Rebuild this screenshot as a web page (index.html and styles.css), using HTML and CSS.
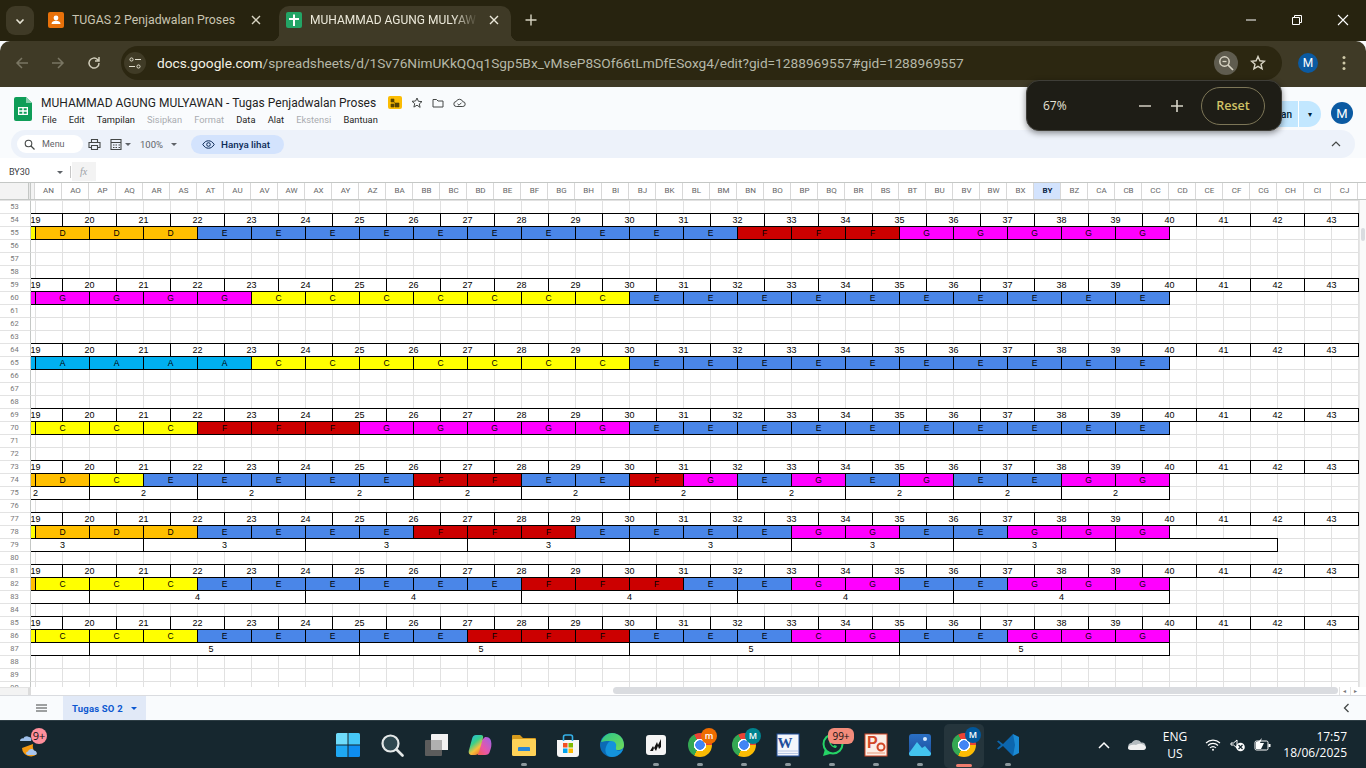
FILE: index.html
```html
<!DOCTYPE html>
<html lang="id">
<head>
<meta charset="utf-8">
<title>MUHAMMAD AGUNG MULYAWAN - Tugas Penjadwalan Proses</title>
<link rel="stylesheet" href="styles.css">
</head>
<body>
<div class="tabs">
  <div class="tabmenu"><svg width="12" height="12" viewBox="0 0 12 12"><path d="M2.500 4.500 6 8l3.500-3.500" fill="none" stroke="#e6e3d4" stroke-width="1.600"/></svg></div>
  <div class="tab">
    <svg class="fav" width="16" height="16" viewBox="0 0 16 16"><rect width="16" height="16" rx="2" fill="#e8710a"/><circle cx="8" cy="6" r="2.400" fill="#fff"/><path d="M3.500 12c0-2.400 2-3.200 4.500-3.200s4.500.8 4.500 3.200z" fill="#fff"/></svg>
    <span class="tabtext">TUGAS 2 Penjadwalan Proses</span>
    <svg class="x" width="10" height="10" viewBox="0 0 10 10"><path d="M1 1l8 8M9 1 1 9" stroke="#d8d4c2" stroke-width="1.400"/></svg>
  </div>
  <div class="tab on">
    <svg class="fav" width="16" height="16" viewBox="0 0 16 16"><rect width="16" height="16" rx="2" fill="#23a566"/><path d="M7 2.500h2V6h4v2H9v6H7V8H3V6h4z" fill="#fff"/></svg>
    <span class="tabtext fade">MUHAMMAD AGUNG MULYAW</span>
    <svg class="x" width="10" height="10" viewBox="0 0 10 10"><path d="M1 1l8 8M9 1 1 9" stroke="#ece9da" stroke-width="1.400"/></svg>
  </div>
  <svg class="plus" width="12" height="12" viewBox="0 0 12 12"><path d="M6 .5v11M.5 6h11" stroke="#d8d4c2" stroke-width="1.400"/></svg>
  <div class="wincontrols">
    <svg width="12" height="12" viewBox="0 0 12 12"><path d="M1 6h10" stroke="#fff"/></svg>
    <svg width="12" height="12" viewBox="0 0 12 12"><path d="M1.500 3.500h7v7h-7zM3.500 3V1.500h7v7H9" fill="none" stroke="#fff"/></svg>
    <svg width="12" height="12" viewBox="0 0 12 12"><path d="M1 1l10 10M11 1 1 11" stroke="#fff" stroke-width="1.100"/></svg>
  </div>
</div>

<div class="navbar">
  <svg class="nav1" width="16" height="16" viewBox="0 0 16 16"><path d="M14 8H3M8 3 3 8l5 5" fill="none" stroke="#7a7663" stroke-width="1.500"/></svg>
  <svg class="nav2" width="16" height="16" viewBox="0 0 16 16"><path d="M2 8h11M8 3l5 5-5 5" fill="none" stroke="#7a7663" stroke-width="1.500"/></svg>
  <svg class="nav3" width="16" height="16" viewBox="0 0 16 16"><path d="M13 8a5 5 0 1 1-1.500-3.500L13 6M13 2v4H9" fill="none" stroke="#cfcbb8" stroke-width="1.500"/></svg>
  <div class="omni">
    <span class="site"><svg width="14" height="14" viewBox="0 0 14 14"><circle cx="3.500" cy="3.500" r="1.600" fill="none" stroke="#e2dfce"/><path d="M7 3.500h6M1 10.500h6" stroke="#e2dfce" stroke-width="1.200"/><circle cx="10.500" cy="10.500" r="1.600" fill="none" stroke="#e2dfce"/></svg></span>
    <span class="url"><span class="host">docs.google.com</span>/spreadsheets/d/1Sv76NimUKkQQq1Sgp5Bx_vMseP8SOf66tLmDfESoxg4/edit?gid=1288969557#gid=1288969557</span>
    <span class="zoombtn"><svg width="16" height="16" viewBox="0 0 16 16"><circle cx="6.500" cy="6.500" r="4.700" fill="none" stroke="#d8d4c4" stroke-width="1.500"/><path d="M10 10l5 5" stroke="#d8d4c4" stroke-width="1.700"/><path d="M4.500 6.500h4" stroke="#d8d4c4" stroke-width="1.300"/></svg></span>
    <svg class="star" width="16" height="16" viewBox="0 0 16 16"><path d="m8 1.500 1.900 4.300 4.600.4-3.500 3 1.100 4.600L8 11.400l-4.100 2.400L5 9.200l-3.500-3 4.600-.4z" fill="none" stroke="#d8d4c4" stroke-width="1.400"/></svg>
  </div>
  <span class="avatar a20">M</span>
  <svg class="more" width="4" height="16" viewBox="0 0 4 16"><circle cx="2" cy="2.500" r="1.500" fill="#cfc9a8"/><circle cx="2" cy="8" r="1.500" fill="#cfc9a8"/><circle cx="2" cy="13.500" r="1.500" fill="#cfc9a8"/></svg>
</div>

<div class="zoompop">
  <span class="pct">67%</span>
  <svg class="zm" width="14" height="14" viewBox="0 0 14 14"><path d="M1 7h12" stroke="#c8c5b8" stroke-width="1.600"/></svg>
  <svg class="zp" width="14" height="14" viewBox="0 0 14 14"><path d="M1 7h12M7 1v12" stroke="#d8d5c8" stroke-width="1.600"/></svg>
  <span class="reset">Reset</span>
</div>

<div class="dochead">
  <svg class="logo" width="18" height="24" viewBox="0 0 18 24"><path d="M2 0h10l6 6v16a2 2 0 0 1-2 2H2a2 2 0 0 1-2-2V2a2 2 0 0 1 2-2z" fill="#0f9d58"/><path d="M12 0l6 6h-6z" fill="#87ceac"/><path d="M4 10h10v8H4zm1.300 1.300v2h3v-2zm4.400 0v2h3v-2zm-4.400 3.400v2h3v-2zm4.400 0v2h3v-2z" fill="#fff" fill-rule="evenodd"/></svg>
  <div class="titles">
    <div class="titleline">
      <span class="doctitle">MUHAMMAD AGUNG MULYAWAN - Tugas Penjadwalan Proses</span>
      <span class="lock"><svg width="10" height="10" viewBox="0 0 10 10"><path d="M1 1l8 8M1 1h3v3H1zM5 5h4v4H5zM1 6h3v3H1z" fill="#5a4500" stroke="#5a4500" stroke-width=".6"/></svg></span>
      <svg class="hicon first" width="12" height="12" viewBox="0 0 12 12"><path d="m6 1 1.400 3.300 3.600.3-2.700 2.300.8 3.500L6 8.200 2.900 10.100l.8-3.500L1 4.300l3.600-.3z" fill="none" stroke="#444746"/></svg>
      <svg class="hicon" width="12" height="12" viewBox="0 0 12 12"><path d="M1 2.500h3.500L6 4h5v6H1z" fill="none" stroke="#444746"/></svg>
      <svg class="hicon" width="13" height="12" viewBox="0 0 13 12"><path d="M3.500 9.500a2.500 2.500 0 0 1-.3-5 3.500 3.500 0 0 1 6.600.2 2.400 2.400 0 0 1 0 4.800zM4.500 6.800 6 8.200l2.500-2.500" fill="none" stroke="#444746"/></svg>
    </div>
    <div class="menus"><span>File</span><span>Edit</span><span>Tampilan</span><span class="dim">Sisipkan</span><span class="dim">Format</span><span>Data</span><span>Alat</span><span class="dim">Ekstensi</span><span>Bantuan</span></div>
  </div>
  <div class="share"><span class="sharetext">Bagikan</span><span class="sharecaret">&#9662;</span></div>
  <span class="avatar a22">M</span>
</div>

<div class="toolbar">
  <div class="search"><svg width="11" height="11" viewBox="0 0 11 11"><circle cx="4.500" cy="4.500" r="3.300" fill="none" stroke="#444746" stroke-width="1.100"/><path d="M7 7l3.500 3.500" stroke="#444746" stroke-width="1.200"/></svg><span>Menu</span></div>
  <svg class="ticon" width="13" height="13" viewBox="0 0 13 13"><path d="M3.500 4V1.500h6V4M3 9.500H1V4.500h11v5h-2M3.500 7.500h6v4h-6z" fill="none" stroke="#444746" stroke-width="1.100"/></svg>
  <svg class="ticon t2" width="12" height="13" viewBox="0 0 12 13"><path d="M1 1.500h10v10H1zM1 4.500h10M3 7h1.500M5.500 7H7M8.500 7H10M3 9.500h1.500M5.500 9.500H7M8.500 9.500H10" fill="none" stroke="#444746" stroke-width="1.100"/></svg>
  <span class="caret c1"></span>
  <span class="pctsel">100%</span>
  <span class="caret c2"></span>
  <div class="viewonly"><svg width="13" height="9" viewBox="0 0 13 9"><path d="M.8 4.500C2.500 1.800 4.300.8 6.500.8s4 1 5.700 3.700c-1.700 2.700-3.500 3.700-5.700 3.700S2.500 7.200.8 4.500z" fill="none" stroke="#0b2a57"/><circle cx="6.500" cy="4.500" r="1.800" fill="none" stroke="#0b2a57"/></svg><span>Hanya lihat</span></div>
  <svg class="collapse" width="10" height="6" viewBox="0 0 10 6"><path d="M1 5l4-4 4 4" fill="none" stroke="#444746" stroke-width="1.200"/></svg>
</div>

<div class="fbar">
  <span class="namebox">BY30</span>
  <span class="caret c3"></span>
  <span class="fsep"></span>
  <span class="fx">fx</span>
</div>

<div class="colhead">
  <div class="corner"></div>
  <div class="cols"><span>AN</span><span>AO</span><span>AP</span><span>AQ</span><span>AR</span><span>AS</span><span>AT</span><span>AU</span><span>AV</span><span>AW</span><span>AX</span><span>AY</span><span>AZ</span><span>BA</span><span>BB</span><span>BC</span><span>BD</span><span>BE</span><span>BF</span><span>BG</span><span>BH</span><span>BI</span><span>BJ</span><span>BK</span><span>BL</span><span>BM</span><span>BN</span><span>BO</span><span>BP</span><span>BQ</span><span>BR</span><span>BS</span><span>BT</span><span>BU</span><span>BV</span><span>BW</span><span>BX</span><span class="sel">BY</span><span>BZ</span><span>CA</span><span>CB</span><span>CC</span><span>CD</span><span>CE</span><span>CF</span><span>CG</span><span>CH</span><span>CI</span><span>CJ</span></div>
</div>

<div class="sheet">
  <div class="rows">
    <div class="r"><b class="rn">53</b></div>
    <div class="r"><b class="rn">54</b><div class="cs nums"><u></u><i>19</i><i>20</i><i>21</i><i>22</i><i>23</i><i>24</i><i>25</i><i>26</i><i>27</i><i>28</i><i>29</i><i>30</i><i>31</i><i>32</i><i>33</i><i>34</i><i>35</i><i>36</i><i>37</i><i>38</i><i>39</i><i>40</i><i>41</i><i>42</i><i>43</i></div></div>
    <div class="r"><b class="rn">55</b><div class="cs bar"><u></u><i class="st y"></i><i class="o">D</i><i class="o">D</i><i class="o">D</i><i class="b">E</i><i class="b">E</i><i class="b">E</i><i class="b">E</i><i class="b">E</i><i class="b">E</i><i class="b">E</i><i class="b">E</i><i class="b">E</i><i class="b">E</i><i class="d">F</i><i class="d">F</i><i class="d">F</i><i class="m">G</i><i class="m">G</i><i class="m">G</i><i class="m">G</i><i class="m">G</i></div></div>
    <div class="r"><b class="rn">56</b></div>
    <div class="r"><b class="rn">57</b></div>
    <div class="r"><b class="rn">58</b></div>
    <div class="r"><b class="rn">59</b><div class="cs nums"><u></u><i>19</i><i>20</i><i>21</i><i>22</i><i>23</i><i>24</i><i>25</i><i>26</i><i>27</i><i>28</i><i>29</i><i>30</i><i>31</i><i>32</i><i>33</i><i>34</i><i>35</i><i>36</i><i>37</i><i>38</i><i>39</i><i>40</i><i>41</i><i>42</i><i>43</i></div></div>
    <div class="r"><b class="rn">60</b><div class="cs bar"><u></u><i class="st m"></i><i class="m">G</i><i class="m">G</i><i class="m">G</i><i class="m">G</i><i class="y">C</i><i class="y">C</i><i class="y">C</i><i class="y">C</i><i class="y">C</i><i class="y">C</i><i class="y">C</i><i class="b">E</i><i class="b">E</i><i class="b">E</i><i class="b">E</i><i class="b">E</i><i class="b">E</i><i class="b">E</i><i class="b">E</i><i class="b">E</i><i class="b">E</i></div></div>
    <div class="r"><b class="rn">61</b></div>
    <div class="r"><b class="rn">62</b></div>
    <div class="r"><b class="rn">63</b></div>
    <div class="r"><b class="rn">64</b><div class="cs nums"><u></u><i>19</i><i>20</i><i>21</i><i>22</i><i>23</i><i>24</i><i>25</i><i>26</i><i>27</i><i>28</i><i>29</i><i>30</i><i>31</i><i>32</i><i>33</i><i>34</i><i>35</i><i>36</i><i>37</i><i>38</i><i>39</i><i>40</i><i>41</i><i>42</i><i>43</i></div></div>
    <div class="r"><b class="rn">65</b><div class="cs bar"><u></u><i class="st a"></i><i class="a">A</i><i class="a">A</i><i class="a">A</i><i class="a">A</i><i class="y">C</i><i class="y">C</i><i class="y">C</i><i class="y">C</i><i class="y">C</i><i class="y">C</i><i class="y">C</i><i class="b">E</i><i class="b">E</i><i class="b">E</i><i class="b">E</i><i class="b">E</i><i class="b">E</i><i class="b">E</i><i class="b">E</i><i class="b">E</i><i class="b">E</i></div></div>
    <div class="r"><b class="rn">66</b></div>
    <div class="r"><b class="rn">67</b></div>
    <div class="r"><b class="rn">68</b></div>
    <div class="r"><b class="rn">69</b><div class="cs nums"><u></u><i>19</i><i>20</i><i>21</i><i>22</i><i>23</i><i>24</i><i>25</i><i>26</i><i>27</i><i>28</i><i>29</i><i>30</i><i>31</i><i>32</i><i>33</i><i>34</i><i>35</i><i>36</i><i>37</i><i>38</i><i>39</i><i>40</i><i>41</i><i>42</i><i>43</i></div></div>
    <div class="r"><b class="rn">70</b><div class="cs bar"><u></u><i class="st y"></i><i class="y">C</i><i class="y">C</i><i class="y">C</i><i class="d">F</i><i class="d">F</i><i class="d">F</i><i class="m">G</i><i class="m">G</i><i class="m">G</i><i class="m">G</i><i class="m">G</i><i class="b">E</i><i class="b">E</i><i class="b">E</i><i class="b">E</i><i class="b">E</i><i class="b">E</i><i class="b">E</i><i class="b">E</i><i class="b">E</i><i class="b">E</i></div></div>
    <div class="r"><b class="rn">71</b></div>
    <div class="r"><b class="rn">72</b></div>
    <div class="r"><b class="rn">73</b><div class="cs nums"><u></u><i>19</i><i>20</i><i>21</i><i>22</i><i>23</i><i>24</i><i>25</i><i>26</i><i>27</i><i>28</i><i>29</i><i>30</i><i>31</i><i>32</i><i>33</i><i>34</i><i>35</i><i>36</i><i>37</i><i>38</i><i>39</i><i>40</i><i>41</i><i>42</i><i>43</i></div></div>
    <div class="r"><b class="rn">74</b><div class="cs bar"><u></u><i class="st o"></i><i class="o">D</i><i class="y">C</i><i class="b">E</i><i class="b">E</i><i class="b">E</i><i class="b">E</i><i class="b">E</i><i class="d">F</i><i class="d">F</i><i class="b">E</i><i class="b">E</i><i class="d">F</i><i class="m">G</i><i class="b">E</i><i class="m">G</i><i class="b">E</i><i class="m">G</i><i class="b">E</i><i class="b">E</i><i class="m">G</i><i class="m">G</i></div></div>
    <div class="r"><b class="rn">75</b><div class="cs lab"><i class="w4">2</i><i class="w4">2</i><i class="w4">2</i><i class="w4">2</i><i class="w4">2</i><i class="w4">2</i><i class="w4">2</i><i class="w4">2</i><i class="w4">2</i><i class="w4">2</i><i class="w4">2</i></div></div>
    <div class="r"><b class="rn">76</b></div>
    <div class="r"><b class="rn">77</b><div class="cs nums"><u></u><i>19</i><i>20</i><i>21</i><i>22</i><i>23</i><i>24</i><i>25</i><i>26</i><i>27</i><i>28</i><i>29</i><i>30</i><i>31</i><i>32</i><i>33</i><i>34</i><i>35</i><i>36</i><i>37</i><i>38</i><i>39</i><i>40</i><i>41</i><i>42</i><i>43</i></div></div>
    <div class="r"><b class="rn">78</b><div class="cs bar"><u></u><i class="st y"></i><i class="o">D</i><i class="o">D</i><i class="o">D</i><i class="b">E</i><i class="b">E</i><i class="b">E</i><i class="b">E</i><i class="d">F</i><i class="d">F</i><i class="d">F</i><i class="b">E</i><i class="b">E</i><i class="b">E</i><i class="b">E</i><i class="m">G</i><i class="m">G</i><i class="b">E</i><i class="b">E</i><i class="m">G</i><i class="m">G</i><i class="m">G</i></div></div>
    <div class="r"><b class="rn">79</b><div class="cs lab"><i class="w6">3</i><i class="w6">3</i><i class="w6">3</i><i class="w6">3</i><i class="w6">3</i><i class="w6">3</i><i class="w6">3</i><i class="w6"></i></div></div>
    <div class="r"><b class="rn">80</b></div>
    <div class="r"><b class="rn">81</b><div class="cs nums"><u></u><i>19</i><i>20</i><i>21</i><i>22</i><i>23</i><i>24</i><i>25</i><i>26</i><i>27</i><i>28</i><i>29</i><i>30</i><i>31</i><i>32</i><i>33</i><i>34</i><i>35</i><i>36</i><i>37</i><i>38</i><i>39</i><i>40</i><i>41</i><i>42</i><i>43</i></div></div>
    <div class="r"><b class="rn">82</b><div class="cs bar"><u></u><i class="st o"></i><i class="y">C</i><i class="y">C</i><i class="y">C</i><i class="b">E</i><i class="b">E</i><i class="b">E</i><i class="b">E</i><i class="b">E</i><i class="b">E</i><i class="d">F</i><i class="d">F</i><i class="d">F</i><i class="b">E</i><i class="b">E</i><i class="m">G</i><i class="m">G</i><i class="b">E</i><i class="b">E</i><i class="m">G</i><i class="m">G</i><i class="m">G</i></div></div>
    <div class="r"><b class="rn">83</b><div class="cs lab"><i class="w4"></i><i class="w8">4</i><i class="w8">4</i><i class="w8">4</i><i class="w8">4</i><i class="w8">4</i></div></div>
    <div class="r"><b class="rn">84</b></div>
    <div class="r"><b class="rn">85</b><div class="cs nums"><u></u><i>19</i><i>20</i><i>21</i><i>22</i><i>23</i><i>24</i><i>25</i><i>26</i><i>27</i><i>28</i><i>29</i><i>30</i><i>31</i><i>32</i><i>33</i><i>34</i><i>35</i><i>36</i><i>37</i><i>38</i><i>39</i><i>40</i><i>41</i><i>42</i><i>43</i></div></div>
    <div class="r"><b class="rn">86</b><div class="cs bar"><u></u><i class="st y"></i><i class="y">C</i><i class="y">C</i><i class="y">C</i><i class="b">E</i><i class="b">E</i><i class="b">E</i><i class="b">E</i><i class="b">E</i><i class="d">F</i><i class="d">F</i><i class="d">F</i><i class="b">E</i><i class="b">E</i><i class="b">E</i><i class="m">C</i><i class="m">G</i><i class="b">E</i><i class="b">E</i><i class="m">G</i><i class="m">G</i><i class="m">G</i></div></div>
    <div class="r"><b class="rn">87</b><div class="cs lab"><i class="w4"></i><i class="w10">5</i><i class="w10">5</i><i class="w10">5</i><i class="w10">5</i></div></div>
    <div class="r"><b class="rn">88</b></div>
    <div class="r"><b class="rn">89</b></div>
    <div class="r"><b class="rn">90</b></div>
  </div>
  <div class="vtrack"><span class="vthumb"></span></div>
</div>

<div class="hbar">
  <span class="hcorner"></span>
  <span class="hthumb"></span>
  <span class="harrow">&#9666;</span>
  <span class="harrow">&#9656;</span>
</div>

<div class="sheetbar">
  <svg class="allsheets" width="11" height="8" viewBox="0 0 11 8"><path d="M0 1h11M0 4h11M0 7h11" stroke="#444746" stroke-width="1.100"/></svg>
  <div class="sheettab"><span>Tugas SO 2</span><span class="caret c4"></span></div>
  <svg class="sidechev" width="7" height="10" viewBox="0 0 7 10"><path d="M5.500 1 1.500 5l4 4" fill="none" stroke="#444746" stroke-width="1.300"/></svg>
</div>

<div class="taskbar">
  <div class="weather">
    <svg width="26" height="28" viewBox="0 0 26 28"><path d="M3 18a9 9 0 0 0 15 6A10 10 0 0 1 14 14z" fill="#f59a12"/><path d="M1 11c0-2 2-3 3.500-2.500C5 6.500 8 5.500 10 7c2 0 3 2 2 4z" fill="#9fc0ea"/><path d="M9 25c-2 0-3-3 0-3.500C9.500 19 13.500 18 15 20.500c3 0 4 4.500 1 4.500z" fill="#a9c6ee"/></svg>
    <span class="wbadge">9+</span>
  </div>
  <div class="tasks">
    <div class="task"><svg width="24" height="24" viewBox="0 0 24 24"><path d="M0 1.500A1.500 1.500 0 0 1 1.500 0h10v11.500H0z" fill="#6fdcfb"/><path d="M12.500 0h10A1.500 1.500 0 0 1 24 1.500v10H12.500z" fill="#46c8f8"/><path d="M0 12.500h11.500V24h-10A1.500 1.500 0 0 1 0 22.500z" fill="#1fa8f3"/><path d="M12.500 12.500H24v10a1.500 1.500 0 0 1-1.500 1.500h-10z" fill="#0e8df0"/></svg></div>
    <div class="task"><svg width="24" height="24" viewBox="0 0 24 24"><circle cx="10.500" cy="10.500" r="8" fill="#2f4850" stroke="#e4e8e8" stroke-width="2.200"/><path d="M16.500 16.500 22.500 22.500" stroke="#e4e8e8" stroke-width="2.600" stroke-linecap="round"/></svg></div>
    <div class="task"><svg width="24" height="24" viewBox="0 0 24 24"><rect x="1" y="7" width="17" height="16" rx="1" fill="#5c5c5c"/><rect x="7" y="1" width="18" height="16" rx="1" fill="#f2f2f2"/><rect x="7" y="7" width="11" height="10" fill="#b0b0b0"/></svg></div>
    <div class="task"><svg width="24" height="24" viewBox="0 0 24 24"><defs><linearGradient id="cop" x1="0" y1="0" x2=".6" y2="1"><stop offset="0" stop-color="#25b4ee"/><stop offset=".45" stop-color="#38d08a"/><stop offset=".75" stop-color="#f6c03c"/><stop offset="1" stop-color="#f08030"/></linearGradient><linearGradient id="cop2" x1="1" y1="0" x2="0" y2="1"><stop offset="0" stop-color="#9a63ea"/><stop offset=".6" stop-color="#e856a8"/><stop offset="1" stop-color="#f5604a"/></linearGradient></defs><path d="M14 7l3-3c3 0 5 .5 6 4 1 4 0 7-1 10-.7 3-2.500 4-5 4h-6c-2 0-1.500-2-1-3z" fill="url(#cop2)"/><path d="M8 2h5c2 0 2.500 1.500 2 3L11 19c-.5 2-2 3-4 3H4c-2.500 0-4-2-3-5L4 6c.6-2.500 2-4 4-4z" fill="url(#cop)"/></svg></div>
    <div class="task run"><svg width="24" height="24" viewBox="0 0 24 24"><path d="M0 3a1 1 0 0 1 1-1h7l3 3h12a1 1 0 0 1 1 1v2H0z" fill="#d69a1c"/><rect y="6" width="24" height="17" rx="1.500" fill="#ffd257"/><path d="M7 14h10a1 1 0 0 1 1 1v3H6v-3a1 1 0 0 1 1-1z" fill="#2a86d6"/></svg></div>
    <div class="task"><svg width="24" height="24" viewBox="0 0 24 24"><path d="M1 7h22v14a3 3 0 0 1-3 3H4a3 3 0 0 1-3-3z" fill="#f6f6f6"/><path d="M7.500 8V4a2 2 0 0 1 2-2h5a2 2 0 0 1 2 2v4" fill="none" stroke="#35b1e8" stroke-width="1.600"/><rect x="7" y="10" width="4.500" height="4.500" fill="#f25022"/><rect x="12.500" y="10" width="4.500" height="4.500" fill="#7fba00"/><rect x="7" y="15.500" width="4.500" height="4.500" fill="#00a4ef"/><rect x="12.500" y="15.500" width="4.500" height="4.500" fill="#ffb900"/></svg></div>
    <div class="task"><svg width="24" height="24" viewBox="0 0 24 24"><defs><linearGradient id="edg" x1="0" y1="0" x2="1" y2="1"><stop offset="0" stop-color="#2bc38a"/><stop offset="1" stop-color="#72dc58"/></linearGradient></defs><circle cx="12" cy="12" r="12" fill="#0c6ab4"/><path d="M1 9C3 3 8 0 12 0c7 0 12 5 12 12 0 4-3 5-6 5-4 0-5-2-4-4 1-3-2-5-5-5-3 0-6 .5-8 1z" fill="url(#edg)"/><path d="M11 8c4 0 6 3 5 6-1 4 3 5 7 2-1 4-6 8-11 8C7 24 4 19 6 14c1-3 3-6 5-6z" fill="#1493dc"/></svg></div>
    <div class="task run"><svg width="20" height="20" viewBox="0 0 20 20"><rect width="20" height="20" rx="3" fill="#f5f5f5"/><path d="M4 16l3-5 1 2 3-6 1 3 3-6v8l-2 2-1-3-2 5-2-3-1 3z" fill="#111"/></svg></div>
    <div class="task run"><span class="chrome"></span><span class="tb orange">m</span></div>
    <div class="task run"><span class="chrome"></span><span class="tb teal">M</span></div>
    <div class="task run"><svg width="24" height="24" viewBox="0 0 24 24"><rect x="1" y="1" width="22" height="22" fill="#f4f6fb" stroke="#1f4e9c"/><path d="M2 18h20M2 20.500h20" stroke="#b8c8e4"/><text x="1.500" y="15" class="wordw">W</text></svg></div>
    <div class="task run"><svg width="24" height="24" viewBox="0 0 24 24"><circle cx="13" cy="11" r="9.500" fill="none" stroke="#25d366" stroke-width="2"/><path d="M5 16 3 23l7-2z" fill="#25d366"/><path d="M9.500 7.500c-1.500 2 3 8 6.500 7.500l1-2-2.500-1-1 1c-1-.5-2-1.500-2.500-2.500l1-1-1-2.500z" fill="#25d366"/></svg><span class="tb pill">99+</span></div>
    <div class="task run"><svg width="24" height="24" viewBox="0 0 24 24"><rect x="1" y="1" width="22" height="22" fill="#fbeee6" stroke="#d24726"/><text x="3" y="15" class="pptp">P</text><circle cx="17" cy="14" r="3.500" fill="none" stroke="#d24726" stroke-width="2"/><path d="M3 20h18" stroke="#e89878"/></svg></div>
    <div class="task run"><svg width="24" height="24" viewBox="0 0 24 24"><defs><linearGradient id="ph" x1="0" y1="0" x2="0" y2="1"><stop offset="0" stop-color="#2a6fc4"/><stop offset="1" stop-color="#1d4f9c"/></linearGradient></defs><rect x="1" y="1" width="22" height="22" rx="3" fill="url(#ph)"/><circle cx="17" cy="6" r="2" fill="#d8ecff"/><path d="M1 20l8-11 5 6 3-2 6 7v1a2 2 0 0 1-2 2H3a2 2 0 0 1-2-2z" fill="#43c4ee"/></svg></div>
    <div class="task active"><span class="chrome"></span><span class="tb blue">M</span></div>
    <div class="task run"><svg width="24" height="24" viewBox="0 0 24 24"><path d="M17 1l6 3v16l-6 3z" fill="#1a8ad4"/><path d="M17 1 7 11 2.500 7.500 1 8.500l4 3.500-4 3.500 1.500 1L7 13l10 10 2-11z" fill="#0c66ae"/></svg></div>
  </div>
  <div class="tray">
    <svg class="tchev" width="12" height="8" viewBox="0 0 12 8"><path d="M1 7l5-5 5 5" fill="none" stroke="#fff" stroke-width="1.500"/></svg>
    <svg class="tcloud" width="18" height="11" viewBox="0 0 18 11"><path d="M4 11a3.500 3.500 0 0 1-.5-7A5.500 5.500 0 0 1 13 3.500 3.800 3.800 0 0 1 14.500 11z" fill="#b5bcc0"/><path d="M0 9c0-2 3-4 8-3 3-2 7-2 10 2 0 2-1 3-3 3H3C1 11 0 10 0 9z" fill="#f0f0f0"/></svg>
    <div class="lang"><span>ENG</span><span>US</span></div>
    <svg class="twifi" width="16" height="13" viewBox="0 0 16 13"><path d="M1 5a10 10 0 0 1 14 0M3 7.500a7 7 0 0 1 10 0M5 10a4 4 0 0 1 6 0" fill="none" stroke="#fff" stroke-width="1.100"/><circle cx="8" cy="11.800" r="1" fill="#fff"/></svg>
    <svg class="tspk" width="16" height="14" viewBox="0 0 16 14"><path d="M1 5h2.500L7 2v8L3.500 7H1z" fill="none" stroke="#fff"/><circle cx="10.500" cy="9" r="4.300" fill="#fff"/><path d="M8.500 7l4 4M12.500 7l-4 4" stroke="#16272f" stroke-width="1.200"/></svg>
    <svg class="tbat" width="17" height="13" viewBox="0 0 17 13"><rect x="1" y="3" width="13" height="9" rx="1.500" fill="none" stroke="#fff"/><rect x="14.500" y="6" width="2" height="3" fill="#fff"/><path d="M2 11V4l3-1 3-3-2 5h4l-3 6z" fill="#fff"/></svg>
    <div class="clock"><span>17:57</span><span>18/06/2025</span></div>
  </div>
</div>
</body>
</html>
```
FILE: styles.css
```css
*{box-sizing:border-box}
html,body{margin:0;padding:0;width:1366px;height:768px;overflow:hidden;background:#f9fbfd;font-family:Roboto,"Liberation Sans",sans-serif}

/* browser tabs */
.tabs{height:41px;background:#27230f;display:flex;align-items:flex-start;position:relative}
.tabmenu{width:28px;height:29px;margin:6px 0 0 6px;background:#3f3a26;border-radius:9px;display:flex;align-items:center;justify-content:center}
.tab{width:232px;height:35px;margin:6px 0 0 6px;display:flex;align-items:center;padding:0 0 7px 8px;color:#c9c5b1;font:12.300px Roboto,sans-serif;position:relative}
.tab .fav{flex:none}
.tabtext{margin-left:8px;width:168px;white-space:nowrap}
.tab .x{margin-left:11px;flex:none}
.tab.on{background:#3f3a26;color:#ece9da;border-radius:10px 10px 0 0;margin-left:7px;padding-left:7px;font-size:12px}
.tab.on::before,.tab.on::after{content:"";position:absolute;bottom:0;width:8px;height:8px}
.tab.on::before{left:-8px;background:radial-gradient(circle at 0 0,transparent 8px,#3f3a26 8.500px)}
.tab.on::after{right:-8px;background:radial-gradient(circle at 100% 0,transparent 8px,#3f3a26 8.500px)}
.fade{-webkit-mask-image:linear-gradient(to right,#000 85%,transparent)}
.plus{margin:14px 0 0 14px}
.wincontrols{margin-left:auto;height:40px;display:flex;align-items:center;gap:34px;margin-right:17px}

/* address bar */
.navbar{height:46px;background:#3f3a26;border-radius:10px 10px 0 0;display:flex;align-items:flex-start;padding-top:5px}
.nav1{margin:9px 0 0 14px}
.nav2{margin:9px 0 0 20px}
.nav3{margin:9px 0 0 20px}
.omni{width:1161px;height:34px;margin-left:19px;background:#2c2711;border-radius:17px;display:flex;align-items:center;padding-left:3px;position:relative}
.site{width:22px;height:22px;border-radius:50%;background:#403b26;display:flex;align-items:center;justify-content:center}
.url{margin-left:11px;font:13.700px Roboto,sans-serif;color:#b6b8a8;white-space:nowrap}
.host{color:#f3f1e4}
.zoombtn{margin-left:auto;width:24px;height:24px;border-radius:50%;background:#5f5c4f;display:flex;align-items:center;justify-content:center}
.star{margin:0 16px 0 12px}
.avatar{border-radius:50%;background:#0b5aa2;color:#fff;display:flex;align-items:center;justify-content:center;flex:none}
.a20{width:20px;height:20px;font-size:12px;margin:7px 0 0 16px}
.a22{width:22px;height:22px;font-size:13px;margin-left:10px}
.more{margin:9px 0 0 24px}

/* zoom bubble */
.zoompop{position:absolute;left:1026px;top:80px;width:256px;height:51px;background:#1e1d16;border:1px solid #3f3e38;border-radius:13px;box-shadow:0 2px 6px rgba(0,0,0,.45);display:flex;align-items:center;z-index:5;color:#e6e3d6}
.pct{margin-left:16px;font:12px "Open Sans",sans-serif;width:95px}
.zm{flex:none}
.zp{margin-left:18px;flex:none}
.reset{margin-left:17px;width:64px;height:38px;border:1px solid #7d7657;border-radius:19px;display:flex;align-items:center;justify-content:center;font:600 12.500px "Open Sans",sans-serif;color:#d0c366}

/* document header */
.dochead{height:43px;background:#f9fbfd;display:flex;align-items:flex-start;padding:7px 0 0 14px}
.logo{margin-top:3px;flex:none}
.titles{margin-left:9px;flex:none}
.titleline{display:flex;align-items:center;height:17px}
.doctitle{font-size:12px;color:#1f1f1f;white-space:nowrap}
.lock{width:14px;height:13px;margin-left:12px;background:#fbbc04;border-radius:2px;display:flex;align-items:center;justify-content:center}
.hicon{margin-left:9px}
.hicon.first{margin-left:9px}
.menus{display:flex;gap:12.200px;margin:3px 0 0 1px;font-size:9.300px;color:#1f1f1f;white-space:nowrap}
.menus .dim{color:#a9acb0}
.share{margin:7px 0 0 auto;width:130px;height:26px;background:#c2e7ff;border-radius:13px;display:flex;align-items:center;justify-content:flex-end;font-size:10px;color:#001d35;font-weight:500}
.sharecaret{width:23px;height:26px;border-left:1px solid #fff;margin-left:6px;display:flex;align-items:center;justify-content:center;font-size:8px}
.dochead .a22{margin:8px 13px 0 10px}

/* toolbar */
.toolbar{height:28px;margin:0 11px;background:#edf2fa;border-radius:14px;display:flex;align-items:center;position:relative;color:#444746}
.search{width:66px;height:18px;margin-left:6px;background:#fff;border-radius:9px;display:flex;align-items:center;padding-left:7px;font-size:9px;gap:7px;color:#5f6368}
.ticon{margin-left:5px;flex:none}
.ticon.t2{margin-left:9px}
.caret{width:0;height:0;border:3px solid transparent;border-top:3.500px solid #5f6368;border-bottom:0;display:inline-block;flex:none}
.c1{margin-left:3px}
.pctsel{margin-left:9px;font-size:9.500px;color:#5f6368}
.c2{margin-left:8px}
.viewonly{margin-left:14px;width:93px;height:19px;border-radius:10px;background:#d3e3fd;display:flex;align-items:center;padding-left:11px;gap:6px;font-size:9.800px;font-weight:500;color:#0b2a57}
.collapse{margin-left:auto;margin-right:14px}

/* formula bar */
.fbar{height:24px;background:#fff;display:flex;align-items:flex-end;padding:0 0 1px 9px;font-size:9px;color:#3c4043}
.namebox{width:48px;height:18px;line-height:18px}
.c3{margin:0 0 7px 0}
.fsep{width:1px;height:12px;margin:0 0 3px 7px;background:#c7c7c7}
.fx{width:24px;height:19px;background:#f3f3f3;margin-left:1px;padding-left:8px;font:italic 10px/19px "Liberation Serif",serif;color:#9aa0a6}

/* column letters */
.colhead{height:18px;display:flex;background:#fff;border-top:1px solid #c4c7c5;border-bottom:1px solid #c4c7c5}
.corner{width:35px;flex:none;background:linear-gradient(to right,#f3f3f3 28px,#c4c7c5 28px 29px,#e8e8e8 29px 30px,#c4c7c5 30px 31px,#f3f3f3 31px)}
.cols{display:flex}
.cols span{width:27px;height:16px;border-right:1px solid #d8d8d8;padding-left:1px;font-size:8px;line-height:16px;text-align:center;color:#666}
.cols span:first-child{box-shadow:-1px 0 0 #d8d8d8}
.cols .sel{background:#d3e3fd;color:#0b1f44;font-weight:700}

/* grid */
.sheet{height:487px;display:flex;overflow:hidden;background:#fff}
.rows{width:1359px;height:494px;flex:none;background-color:#fff;background-image:linear-gradient(to right,#e1e1e1 1px,transparent 1px),linear-gradient(to bottom,#e1e1e1 1px,transparent 1px);background-size:27px 100%,100% 13px;background-position:8px 0,0 0;overflow:hidden}
.r{display:flex;height:13px}
.rn{width:31px;height:13px;flex:none;position:relative;z-index:2;background:#fff;border-top:1px solid #e3e3e3;border-right:1px solid #c4c7c5;font-size:7.500px;font-weight:400;line-height:12px;text-align:center;color:#777;padding-right:1px}
.cs{display:flex;margin-left:-50px;flex:none}
.cs u{width:27px;flex:none;text-decoration:none}
.cs i{height:14px;flex:none;width:55px;margin-right:-1px;border:1px solid #000;font-style:normal;text-align:center;color:#000;background:#fff}
.nums i,.lab i{font-size:9px;line-height:12px;font-family:"Liberation Sans",sans-serif}
.bar i{font-size:8.500px;line-height:12px;font-family:"Liberation Sans",sans-serif}
.bar .st{width:28px}
.bar .o{background:#ffbf00}
.bar .b{background:#4a86e8}
.bar .d{background:#cc0000}
.bar .m{background:#ff00ff}
.bar .y{background:#ffff00}
.bar .a{background:#00b0f0}
.cs .w4{width:109px}
.cs .w6{width:163px}
.cs .w8{width:217px}
.cs .w10{width:271px;padding-right:27px}
.vtrack{flex:1;background:#fafafa;padding:28px 1px 0 1px;border-left:1px solid #e6e6e6}
.vthumb{display:block;height:13px;border-radius:4px;background:#dadce0}

/* horizontal scrollbar */
.hbar{height:9px;background:#fff;display:flex;align-items:stretch;border-bottom:1px solid #dadce0}
.hcorner{width:31px;flex:none;background:#f3f3f3;border-right:3px solid #dcdcdc;border-top:1px solid #e3e3e3}
.hthumb{width:725px;margin:0 0 1px 582px;background:#dadce0;border-radius:4px}
.harrow{width:10px;margin-left:1px;font-size:6px;line-height:8px;text-align:center;color:#777;border-left:1px solid #e3e3e3}
.harrow:first-of-type{margin-left:4px}

/* sheet tabs */
.sheetbar{height:24px;background:#f9fbfd;display:flex;align-items:center}
.allsheets{margin-left:36px;flex:none}
.sheettab{width:83px;height:24px;margin-left:16px;background:#e1e9f7;display:flex;align-items:center;padding-left:9px;gap:8px;font-size:9.500px;font-weight:700;color:#0b57d0;letter-spacing:.2px}
.c4{border-top-color:#0b57d0}
.sidechev{margin-left:auto;margin-right:16px}

/* windows taskbar */
.taskbar{height:48px;background:#16272f;border-top:1px solid #2d3d44;display:flex;align-items:stretch;color:#fff}
.weather{width:326px;position:relative;padding:9px 0 0 19px}
.wbadge{position:absolute;left:31px;top:7px;width:16px;height:16px;border-radius:50%;background:#ff8f9c;color:#111;font:11px/16px "Open Sans",sans-serif;text-align:center}
.tasks{display:flex}
.task{width:44px;position:relative;display:flex;align-items:center;justify-content:center;padding-top:1px}
.task.run::after,.task.active::after{content:"";position:absolute;left:19px;bottom:2px;width:6px;height:3px;border-radius:2px;background:#8b979c}
.task.active{background:#25353c;border-radius:5px;margin:3px 2px 0;width:40px;padding:0 0 2px}
.task.active::after{left:12px;width:16px;background:#ef7d6e;bottom:1px}
.chrome{width:24px;height:24px;border-radius:50%;background:radial-gradient(circle,#4285f4 0 4.500px,#fff 5px 6px,transparent 6.500px),conic-gradient(#ea4335 0 90deg,#fbbc04 90deg 210deg,#34a853 210deg 330deg,#ea4335 330deg)}
.tb{position:absolute;left:23px;top:7px;width:16px;height:16px;border-radius:50%;color:#fff;font:600 9px/16px "Open Sans",sans-serif;text-align:center}
.active .tb{left:21px;top:3px}
.orange{background:#ef6c00}
.teal{background:#00838f}
.blue{background:#01579b}
.pill{left:18px;top:7px;width:26px;border-radius:6px;background:#f28b7a;color:#111;font:400 10px/16px "Open Sans",sans-serif}
.wordw{font:700 15px "Liberation Serif",serif;fill:#1f4e9c}
.pptp{font:700 16px "Liberation Sans",sans-serif;fill:#d24726}
.tray{flex:1;display:flex;align-items:center}
.tchev{margin-left:68px}
.tcloud{margin-left:18px}
.lang{width:28px;margin-left:15px;display:flex;flex-direction:column;align-items:center;font:12px/17px "Open Sans",sans-serif}
.twifi{margin-left:16px}
.tspk{margin-left:9px}
.tbat{margin-left:8px}
.clock{margin-left:auto;margin-right:19px;display:flex;flex-direction:column;align-items:flex-end;font:12px/16px "Open Sans",sans-serif}
```
